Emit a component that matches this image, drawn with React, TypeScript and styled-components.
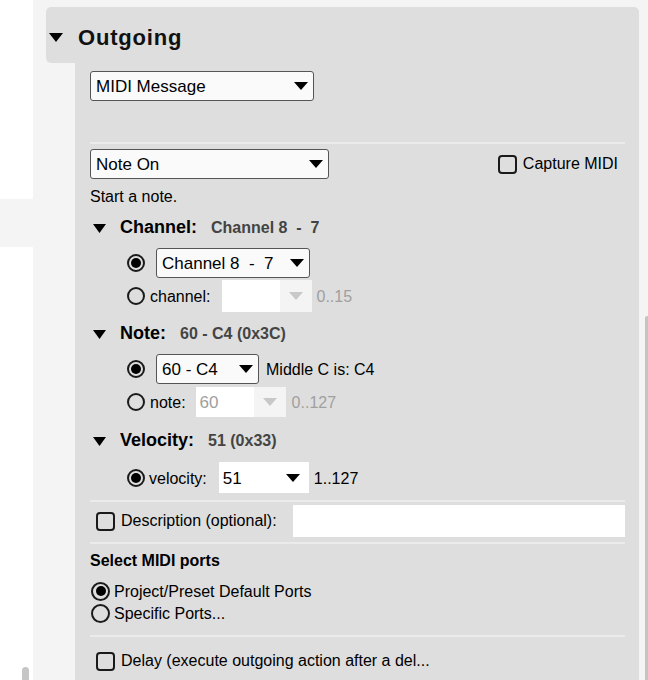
import React from 'react';
import styled, { createGlobalStyle } from 'styled-components';

const GlobalStyle = createGlobalStyle`
  html, body { margin: 0; padding: 0; background: #fff; }
  body { font-family: "Liberation Sans", Arial, sans-serif; color: #000; }
  * { box-sizing: border-box; }
`;

const Page = styled.div`
  display: flex;
  height: 680px;
  overflow: hidden;
`;

const Sidebar = styled.div`
  width: 33px;
  flex: none;
  background: #fff;
  display: flex;
  flex-direction: column;
  padding-top: 199px;
`;

const SidebarItem = styled.div`
  height: 48px;
  background: #f4f4f4;
`;

const SidebarThumb = styled.div`
  margin-top: auto;
  margin-left: 22px;
  width: 7px;
  height: 13px;
  border-radius: 4px 4px 0 0;
  background: #c6c6c6;
`;

const Main = styled.div`
  flex: 1;
  background: #f4f4f4;
  display: flex;
  padding: 7px 0 0 13px;
`;

const Panel = styled.section`
  width: 593px;
  flex: none;
  display: flex;
  flex-direction: column;
`;

const ScrollTrack = styled.div`
  margin-left: 6px;
  width: 3px;
  flex: none;
  padding-top: 309px;
  display: flex;
`;

const ScrollThumb = styled.div`
  flex: 1;
  background: #c4c4c4;
  border-top-left-radius: 2px;
`;

const PanelHeader = styled.div`
  height: 56px;
  flex: none;
  background: #dedede;
  border-radius: 5px 5px 0 5px;
  display: flex;
  align-items: center;
  padding: 5px 0 0 3px;
`;

const Title = styled.h2`
  margin: 0 0 0 15px;
  font-size: 22px;
  font-weight: bold;
  letter-spacing: 0.8px;
  color: #111;
`;

const PanelBody = styled.div`
  flex: 1;
  margin-left: 29px;
  background: #dedede;
  padding: 8px 14px 0 15px;
  display: flex;
  flex-direction: column;
`;

const CaretSvg = styled.svg<{ $dy?: number }>`
  flex: none;
  display: block;
  margin-top: ${p => p.$dy ?? 0}px;
`;

const Caret = ({ w = 14, h = 9, dy }: { w?: number; h?: number; dy?: number }) => (
  <CaretSvg $dy={dy} width={w} height={h} viewBox={`0 0 ${w} ${h}`}>
    <polygon points={`0,0 ${w},0 ${w / 2},${h}`} fill="#000" />
  </CaretSvg>
);

const ArrowSvg = styled.svg`
  flex: none;
  display: block;
`;

const Arrow = ({ color = '#000' }: { color?: string }) => (
  <ArrowSvg width={14} height={8} viewBox="0 0 14 8">
    <polygon points="0,0 14,0 7,8" fill={color} />
  </ArrowSvg>
);

type Variant = 'boxed' | 'plain' | 'disabled';

const SelectBox = styled.div<{ $w: number; $h?: number; $variant?: Variant; $ml?: number }>`
  width: ${p => p.$w}px;
  height: ${p => p.$h ?? 30}px;
  margin-left: ${p => p.$ml ?? 0}px;
  flex: none;
  display: flex;
  align-items: center;
  font-size: 17px;
  white-space: pre;
  ${p =>
    p.$variant === 'plain'
      ? `background: #fff; padding: 0 9px 0 4px; color: #000;`
      : p.$variant === 'disabled'
      ? `background: #fff; padding: 0 0 0 4px; color: #a0a0a0;`
      : `background: #fafafa; border: 1px solid #555; border-radius: 3px; padding: 0 5px 0 5px; color: #000;`}
`;

const SelectText = styled.span`
  flex: 1;
  overflow: hidden;
  padding-top: 2px;
`;

const DisabledArrowCell = styled.span`
  width: 32px;
  align-self: stretch;
  background: #f4f4f4;
  display: flex;
  align-items: center;
  justify-content: center;
`;

const Select = ({
  value,
  w,
  h,
  variant = 'boxed',
  ml,
}: {
  value: string;
  w: number;
  h?: number;
  variant?: Variant;
  ml?: number;
}) => (
  <SelectBox $w={w} $h={h} $variant={variant} $ml={ml}>
    <SelectText>{value}</SelectText>
    {variant === 'disabled' ? (
      <DisabledArrowCell>
        <Arrow color="#c8c8c8" />
      </DisabledArrowCell>
    ) : (
      <Arrow />
    )}
  </SelectBox>
);

const Divider = styled.div<{ $mt: number }>`
  height: 2px;
  flex: none;
  margin-top: ${p => p.$mt}px;
  background: #ebebeb;
`;

const Block = styled.div<{ $mt: number }>`
  margin-top: ${p => p.$mt}px;
  flex: none;
`;

const CaptureRow = styled.div<{ $mt: number }>`
  margin-top: ${p => p.$mt}px;
  height: 30px;
  display: flex;
  align-items: center;
  justify-content: space-between;
`;

const CheckLabel = styled.label<{ $pl?: number; $pr?: number }>`
  display: flex;
  align-items: center;
  font-size: 16px;
  padding-left: ${p => p.$pl ?? 0}px;
  padding-right: ${p => p.$pr ?? 0}px;
  white-space: nowrap;
`;

const Checkbox = styled.span`
  width: 19px;
  height: 19px;
  flex: none;
  border: 2px solid #1a1a1a;
  border-radius: 4px;
  margin-right: 6px;
`;

const Note = styled.div<{ $mt: number }>`
  margin-top: ${p => p.$mt}px;
  font-size: 16px;
  line-height: 20px;
`;

const Heading = styled.div<{ $mt: number }>`
  margin-top: ${p => p.$mt}px;
  height: 22px;
  display: flex;
  align-items: center;
  padding-left: 3px;
`;

const HeadingText = styled.div`
  display: flex;
  align-items: baseline;
  margin-left: 14px;
  line-height: 22px;
`;

const HeadingLabel = styled.span`
  font-size: 18px;
  font-weight: bold;
`;

const HeadingValue = styled.span`
  font-size: 16px;
  font-weight: bold;
  color: #444;
  margin-left: 14px;
  white-space: pre;
`;

const OptionRow = styled.div<{ $mt: number; $h: number; $indent?: number }>`
  margin-top: ${p => p.$mt}px;
  height: ${p => p.$h}px;
  display: flex;
  align-items: center;
  padding-left: ${p => p.$indent ?? 37}px;
  font-size: 16px;
`;

const Radio = styled.span<{ $checked?: boolean; $size?: number }>`
  width: ${p => p.$size ?? 18}px;
  height: ${p => p.$size ?? 18}px;
  flex: none;
  border: 2px solid #1a1a1a;
  border-radius: 50%;
  display: flex;
  align-items: center;
  justify-content: center;
  &::after {
    content: '';
    width: 10px;
    height: 10px;
    border-radius: 50%;
    background: ${p => (p.$checked ? '#000' : 'transparent')};
  }
`;

const RowLabel = styled.span<{ $ml: number }>`
  margin-left: ${p => p.$ml}px;
  padding-top: 2px;
  white-space: nowrap;
`;

const Hint = styled.span<{ $muted?: boolean; $ml?: number }>`
  margin-left: ${p => p.$ml ?? 5}px;
  padding-top: 2px;
  color: ${p => (p.$muted ? '#a0a0a0' : '#000')};
  white-space: nowrap;
`;

const DescRow = styled.div<{ $mt: number }>`
  margin-top: ${p => p.$mt}px;
  height: 32px;
  display: flex;
  align-items: center;
`;

const TextInput = styled.div`
  margin-left: auto;
  width: 332px;
  height: 32px;
  background: #fff;
`;

const SectionTitle = styled.div<{ $mt: number }>`
  margin-top: ${p => p.$mt}px;
  font-size: 16px;
  font-weight: bold;
  line-height: 20px;
`;

const PortRow = styled.div<{ $mt: number }>`
  margin-top: ${p => p.$mt}px;
  height: 22px;
  display: flex;
  align-items: center;
  padding-left: 1px;
  font-size: 16px;
`;

export default function App() {
  return (
    <>
      <GlobalStyle />
      <Page>
        <Sidebar>
          <SidebarItem />
          <SidebarThumb />
        </Sidebar>
        <Main>
          <Panel>
            <PanelHeader>
              <Caret w={14} h={9} />
              <Title>Outgoing</Title>
            </PanelHeader>
            <PanelBody>
              <Block $mt={0}>
                <Select value="MIDI Message" w={224} />
              </Block>
              <Divider $mt={41} />
              <CaptureRow $mt={5}>
                <Select value="Note On" w={239} />
                <CheckLabel $pr={7}>
                  <Checkbox />
                  Capture MIDI
                </CheckLabel>
              </CaptureRow>
              <Note $mt={8}>Start a note.</Note>

              <Heading $mt={9}>
                <Caret w={13} h={9} dy={2} />
                <HeadingText>
                  <HeadingLabel>Channel:</HeadingLabel>
                  <HeadingValue>{'Channel 8  -  7'}</HeadingValue>
                </HeadingText>
              </Heading>
              <OptionRow $mt={10} $h={30}>
                <Radio $checked />
                <Select value={'Channel 8  -  7'} w={154} ml={11} />
              </OptionRow>
              <OptionRow $mt={2} $h={32}>
                <Radio />
                <RowLabel $ml={5}>channel:</RowLabel>
                <Select value="" w={90} h={32} variant="disabled" ml={11} />
                <Hint $muted>0..15</Hint>
              </OptionRow>

              <Heading $mt={10}>
                <Caret w={13} h={9} dy={2} />
                <HeadingText>
                  <HeadingLabel>Note:</HeadingLabel>
                  <HeadingValue>60 - C4 (0x3C)</HeadingValue>
                </HeadingText>
              </Heading>
              <OptionRow $mt={10} $h={30}>
                <Radio $checked />
                <Select value="60 - C4" w={103} ml={11} />
                <Hint $ml={7}>Middle C is: C4</Hint>
              </OptionRow>
              <OptionRow $mt={3} $h={30}>
                <Radio />
                <RowLabel $ml={5}>note:</RowLabel>
                <Select value="60" w={90} variant="disabled" ml={10} />
                <Hint $muted $ml={6}>0..127</Hint>
              </OptionRow>

              <Heading $mt={12}>
                <Caret w={13} h={9} dy={2} />
                <HeadingText>
                  <HeadingLabel>Velocity:</HeadingLabel>
                  <HeadingValue>51 (0x33)</HeadingValue>
                </HeadingText>
              </Heading>
              <OptionRow $mt={11} $h={31}>
                <Radio $checked />
                <RowLabel $ml={4}>velocity:</RowLabel>
                <Select value="51" w={90} h={31} variant="plain" ml={12} />
                <Hint>1..127</Hint>
              </OptionRow>

              <Divider $mt={7} />
              <DescRow $mt={3}>
                <CheckLabel $pl={6}>
                  <Checkbox />
                  Description (optional):
                </CheckLabel>
                <TextInput />
              </DescRow>
              <Divider $mt={5} />

              <SectionTitle $mt={7}>Select MIDI ports</SectionTitle>
              <PortRow $mt={9}>
                <Radio $checked $size={19} />
                <RowLabel $ml={4}>Project/Preset Default Ports</RowLabel>
              </PortRow>
              <PortRow $mt={0}>
                <Radio $size={19} />
                <RowLabel $ml={4}>Specific Ports...</RowLabel>
              </PortRow>
              <Divider $mt={11} />
              <DescRow $mt={8}>
                <CheckLabel $pl={6}>
                  <Checkbox />
                  Delay (execute outgoing action after a del...
                </CheckLabel>
              </DescRow>
            </PanelBody>
          </Panel>
          <ScrollTrack>
            <ScrollThumb />
          </ScrollTrack>
        </Main>
      </Page>
    </>
  );
}
